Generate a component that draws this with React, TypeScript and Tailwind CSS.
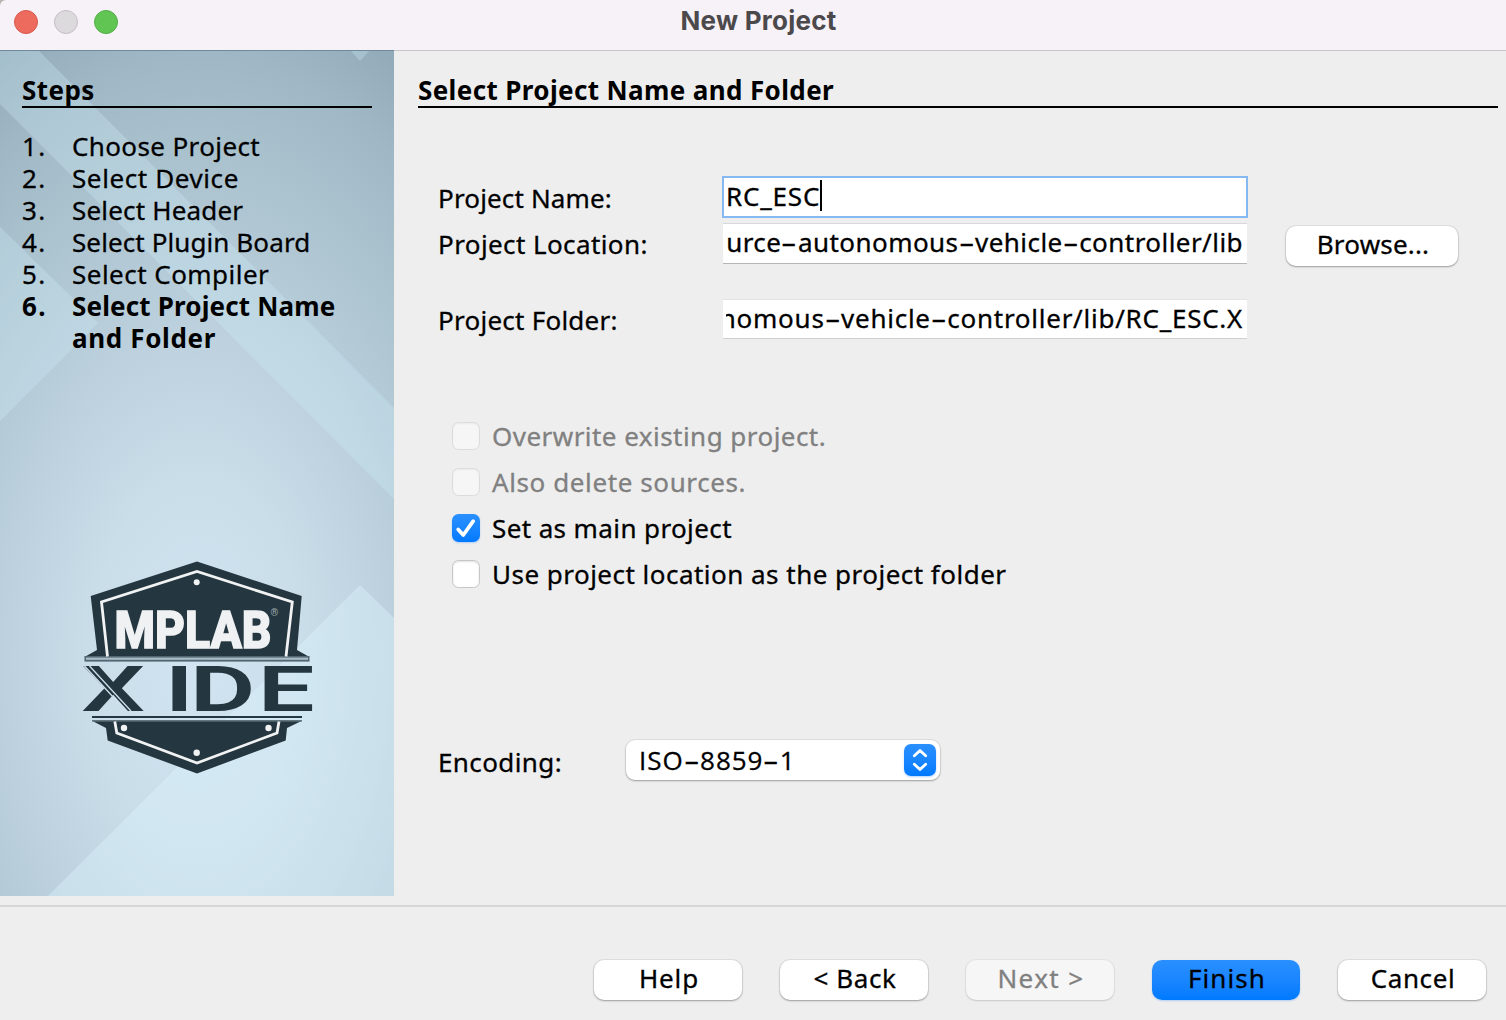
import React from 'react';

const steps = [
  { n: '1.', lines: ['Choose Project'], track: 'tracking-[0.38px]' },
  { n: '2.', lines: ['Select Device'], track: 'tracking-[0.6px]' },
  { n: '3.', lines: ['Select Header'], track: 'tracking-[0.18px]' },
  { n: '4.', lines: ['Select Plugin Board'], track: 'tracking-[0.1px]' },
  { n: '5.', lines: ['Select Compiler'], track: 'tracking-[0.47px]' },
  { n: '6.', lines: ['Select Project Name', 'and Folder'], track: 'tracking-[0.16px] [&>:last-child]:tracking-[0.65px]', current: true },
];

/* Renders hyphens as wide dashes. */
function Wide({ text }: { text: string }) {
  return (
    <>
      {text.split(/(-)/).map((part, i) =>
        part === '-' ? (
          <span key={i} className="inline-block w-[16.5px] origin-center -translate-x-[0.5px] scale-x-[1.85] text-center font-['Noto_Sans'] tracking-normal">
            -
          </span>
        ) : (
          part
        ),
      )}
    </>
  );
}

function SidebarArt() {
  return (
    <svg className="absolute inset-0" width="394" height="846" viewBox="0 50 394 846">
      <defs>
        <radialGradient id="base" gradientUnits="userSpaceOnUse" cx="0" cy="0" r="1" gradientTransform="translate(197 660) scale(420 710)">
          <stop offset="0" stopColor="#d0e4f1" />
          <stop offset="0.25" stopColor="#cadeea" />
          <stop offset="0.45" stopColor="#bdd2de" />
          <stop offset="0.6" stopColor="#b2c8d5" />
          <stop offset="0.85" stopColor="#a0b8c5" />
          <stop offset="1" stopColor="#8fa8b5" />
        </radialGradient>
      </defs>
      <rect y="50" width="394" height="846" fill="url(#base)" />
      <g fill="#cdeefa" fillOpacity="0.3">
        <path d="M0 50H38L394 408V499L0 104Z" />
        <path d="M0 227L98 323L0 421Z" />
        <path d="M350 50H370L360 61Z" />
      </g>
      <path d="M360 585L394 618V896H48Z" fill="#dcf2fd" fillOpacity="0.42" />
      <rect y="50" width="394" height="1" fill="#6f8a99" />

      <g fill="#24363f">
        <path d="M197 561.5L301.7 596L297 650L309.5 657H84.5L97 650L90.7 596Z" />
        <path d="M92 720.7H302L287 728L285.7 740.5L197 773.5L107.7 740.5L106 728Z" />
        <rect x="92" y="716" width="210" height="2" />
      </g>
      <rect x="84.5" y="656" width="225" height="5.6" fill="#526772" />
      <rect x="86" y="657.6" width="222" height="2.2" fill="#a9bcc7" />
      <rect x="92" y="720" width="210" height="1.6" fill="#62777f" />
      <g fill="none" stroke="#f1f2f3" strokeWidth="2.8">
        <path d="M107.5 656.5L101.5 602L197 571.5L292.3 602L286 656.5" />
        <path d="M114.8 721.5L116.8 733L197 763L277 733L279 721.5" />
      </g>
      <g fill="#f1f2f3">
        <circle cx="196.7" cy="582.3" r="3" />
        <circle cx="124" cy="728" r="3.2" />
        <circle cx="268.5" cy="728" r="3.2" />
        <circle cx="196.7" cy="752.7" r="3.2" />
      </g>
      <text
        x="114.5"
        y="647.5"
        textLength="157"
        lengthAdjust="spacingAndGlyphs"
        fontFamily="Roboto, sans-serif"
        fontWeight="800"
        fontSize="52.5"
        fill="#eff1f3"
        stroke="#eff1f3"
        strokeWidth="1.6"
      >
        MPLAB
      </text>
      <text x="270.5" y="616" fontFamily="Roboto, sans-serif" fontSize="10" fontWeight="700" fill="#9aa5ab">
        ®
      </text>
      <text
        transform="translate(0 711) scale(1.6 1)"
        x="50.8 92 102.9 118.6 161.1"
        y="0"
        fontFamily="Roboto, sans-serif"
        fontWeight="600"
        fontSize="63"
        fill="#24363f"
        xmlSpace="preserve"
      >
        X IDE
      </text>
      <g stroke="#cfe1ed" strokeWidth="1.3">
        <path d="M84.5 666L126 711" />
        <path d="M89.5 666L131 711" />
      </g>
    </svg>
  );
}

function Button({ children, className = '', width = 'w-[148px]' }: { children: React.ReactNode; className?: string; width?: string }) {
  return (
    <button className={`flex h-10 shrink-0 justify-center rounded-[10px] pt-[2px] pl-[2px] leading-[32px] whitespace-pre ${width} ${className}`}>
      {children}
    </button>
  );
}

const raised = 'bg-white shadow-[0_0_0_1px_rgba(0,0,0,0.06),0_1px_2px_rgba(0,0,0,0.3)]';

function Check({ label, track, state }: { label: string; track: string; state: 'off' | 'on' | 'disabled' }) {
  const box =
    state === 'on'
      ? 'bg-linear-to-b from-[#2a90ff] to-[#007aff] shadow-[0_1px_2px_rgba(0,110,255,0.25)]'
      : state === 'off'
        ? 'bg-white border border-[#c6c6c6] shadow-[inset_0_1px_2px_rgba(0,0,0,0.12)]'
        : 'bg-[#f6f6f6] border border-[#dcdcdc] shadow-[inset_0_1px_2px_rgba(0,0,0,0.05)]';
  return (
    <label className={`flex h-[46px] items-start ${state === 'disabled' ? 'text-[#808080]' : 'text-black'}`}>
      <span className={`mt-[2px] mr-3 h-7 w-7 shrink-0 rounded-[6.5px] ${box}`}>
        {state === 'on' && (
          <svg width="28" height="28" viewBox="0 0 28 28" fill="none" stroke="#fff" strokeWidth="3.7" strokeLinecap="round" strokeLinejoin="round">
            <path d="M6.2 15.4L11.3 21L21.2 7.2" />
          </svg>
        )}
      </span>
      <span className={`whitespace-nowrap ${track}`}>{label}</span>
    </label>
  );
}

export default function App() {
  return (
    <div className="flex h-[1020px] w-[1506px] flex-col overflow-hidden bg-[#b9b5b3] font-['Noto_Sans','Open_Sans',sans-serif] text-[26px] leading-[32px] text-black [-webkit-text-stroke:0.3px]">
      <header className="flex h-[50px] shrink-0 items-start rounded-tl-[6px] bg-[#f7f2f8] pt-[10px] pl-[14px]">
        <div className="flex gap-4">
          <span className="h-6 w-6 rounded-full border border-[#d9574c] bg-[#ec6a5e]" />
          <span className="h-6 w-6 rounded-full border border-[#c3bfc4] bg-[#dddade]" />
          <span className="h-6 w-6 rounded-full border border-[#52ad45] bg-[#61c554]" />
        </div>
        <h1 className="-mt-[5px] ml-[562.5px] font-[Inter] font-bold tracking-[0.24px] text-[#4b494b] [-webkit-text-stroke:0px]">New Project</h1>
      </header>

      <div className="flex h-[855px] shrink-0 items-start bg-[#eeeeee]">
        <aside className="relative h-[846px] w-[394px] shrink-0">
          <SidebarArt />
          <div className="relative pt-6 pr-[22px] pl-[22px]">
            <h2 className="h-[34px] border-b-2 border-black font-bold tracking-[0.45px] [-webkit-text-stroke:0px]">Steps</h2>
            <ol className="mt-[22px]">
              {steps.map((s) => (
                <li key={s.n} className={`flex ${s.current ? 'font-bold [-webkit-text-stroke:0px]' : ''}`}>
                  <span className="w-[50px] tracking-[1.5px]">{s.n}</span>
                  <span className={`whitespace-nowrap ${s.track}`}>
                    {s.lines.map((l) => (
                      <span key={l} className="block">
                        {l}
                      </span>
                    ))}
                  </span>
                </li>
              ))}
            </ol>
          </div>
        </aside>

        <main className="h-full flex-1 border-t border-[#c6c4c7] pt-[23px] pl-6">
          <h2 className="mr-2 h-[34px] border-b-2 border-black font-bold tracking-[0.38px] [-webkit-text-stroke:0px]">
            Select Project Name and Folder
          </h2>

          <div className="mt-[68px] flex h-[47px] items-start pl-5">
            <span className="mt-[6px] w-[284px] shrink-0 tracking-[0.15px]">Project Name:</span>
            <div className="flex h-[42px] w-[526px] items-start border-2 border-[#86b9f2] bg-white pt-[2px] pl-[2px]">
              <span className="tracking-[0.8px]">RC_ESC</span>
              <span className="h-[31px] w-[2px] bg-black" />
            </div>
          </div>

          <div className="flex h-[76px] items-start pl-5">
            <span className="mt-[5px] w-[285px] shrink-0 tracking-[0.4px]">Project Location:</span>
            <div className="flex h-[41px] w-[524px] shrink-0 justify-end border-t border-b border-t-[#d8d9dd] border-b-[#b5b5b5] bg-white pt-[2px] pr-1 whitespace-nowrap">
              <span className="tracking-[0.45px]">
                <Wide text="urce-autonomous-vehicle-controller/lib" />
              </span>
            </div>
            <Button width="w-[172px]" className={`mt-[3px] ml-[39px] tracking-[0.2px] ${raised}`}>Browse...</Button>
          </div>

          <div className="flex h-[122px] items-start pl-5">
            <span className="mt-[5px] w-[285px] shrink-0 tracking-[0.25px]">Project Folder:</span>
            <div className="flex h-10 w-[524px] border-t border-b border-t-[#e4e4e4] border-b-[#d0d0d0] bg-white pt-[2px] pr-1 pl-[3px]">
              <div className="flex flex-1 justify-end overflow-hidden whitespace-nowrap">
                <span className="tracking-[0.74px]">
                  <Wide text="nomous-vehicle-controller/lib/RC_ESC.X" />
                </span>
              </div>
            </div>
          </div>

          <div className="-mt-px pl-[34px]">
            <Check state="disabled" label="Overwrite existing project." track="tracking-[0.46px]" />
            <Check state="disabled" label="Also delete sources." track="tracking-[0.6px]" />
            <Check state="on" label="Set as main project" track="tracking-[0.39px]" />
            <Check state="off" label="Use project location as the project folder" track="tracking-[0.48px]" />
          </div>

          <div className="mt-[136px] flex items-start pl-5">
            <span className="mt-[6px] w-[188px] tracking-[0.4px]">Encoding:</span>
            <div className={`flex h-10 w-[314px] items-start justify-between rounded-[9px] pt-1 pr-1 pl-[13px] ${raised}`}>
              <span className="font-['Open_Sans'] tracking-[0.95px]">
                <Wide text="ISO-8859-1" />
              </span>
              <span className="h-8 w-8 rounded-[7px] bg-linear-to-b from-[#2a90ff] to-[#007aff] shadow-[0_1px_2px_rgba(0,110,255,0.3)]">
                <svg width="32" height="32" viewBox="0 0 32 32" fill="none" stroke="#fff" strokeWidth="2.8" strokeLinecap="round" strokeLinejoin="round">
                  <path d="M10.3 11.8L16 6.4L21.7 11.8M10.3 20.2L16 25.6L21.7 20.2" />
                </svg>
              </span>
            </div>
          </div>
        </main>
      </div>

      <footer className="flex flex-1 items-start justify-end gap-[38px] border-t-2 border-[#d6d6d6] bg-[#eeeeee] pt-[53px] pr-5">
        <Button className={`tracking-[0.9px] ${raised}`}>Help</Button>
        <Button className={`tracking-[0.55px] ${raised}`}>{'< Back'}</Button>
        <Button className="bg-[#f6f6f6] tracking-[1.4px] text-[#808080] shadow-[0_0_0_1px_rgba(0,0,0,0.04),0_1px_2px_rgba(0,0,0,0.12)]">
          {'Next >'}
        </Button>
        <Button className="bg-linear-to-b from-[#2a90ff] to-[#007aff] tracking-[1.1px] shadow-[0_1px_2px_rgba(0,110,255,0.25)]">
          Finish
        </Button>
        <Button className={`tracking-[0.6px] ${raised}`}>Cancel</Button>
      </footer>
    </div>
  );
}
